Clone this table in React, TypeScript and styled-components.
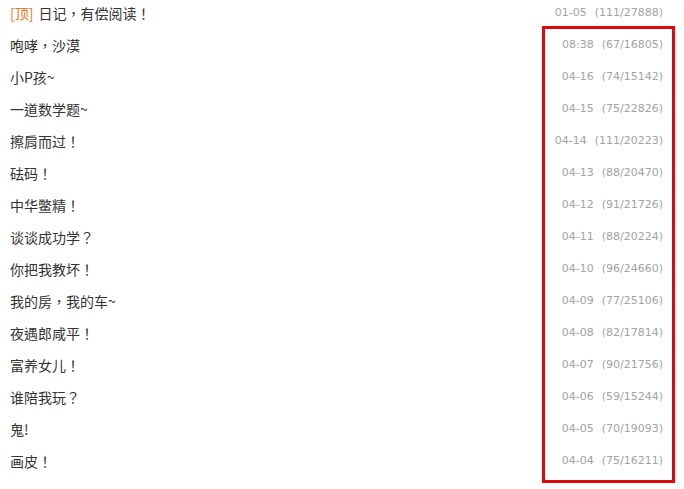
import React from "react";
import styled, { createGlobalStyle } from "styled-components";

const Global = createGlobalStyle`
  html, body { margin: 0; padding: 0; background: #fff; }
  body { width: 684px; height: 489px; overflow: hidden; }
`;

const Page = styled.div`
  position: relative;
  width: 684px;
  height: 489px;
`;

const List = styled.ul`
  list-style: none;
  margin: 0;
  padding: 0 21px 0 10px;
`;

const Row = styled.li`
  display: flex;
  align-items: center;
  justify-content: space-between;
  height: 26px;
  padding-bottom: 6px;
`;

const Title = styled.span`
  font-family: "Noto Sans CJK TC", "Noto Sans CJK SC", "Noto Sans", sans-serif;
  font-size: 14px;
  color: #333;
  line-height: 26px;
`;

const Tag = styled.span`
  color: #e8761e;
  margin-right: 5px;
`;

const Meta = styled.span`
  font-family: "DejaVu Sans", sans-serif;
  font-size: 11px;
  color: #a3a3a3;
  line-height: 26px;
  white-space: nowrap;
`;

const Count = styled.span`
  margin-left: 8px;
`;

const Highlight = styled.div`
  position: absolute;
  left: 542px;
  top: 26px;
  width: 127px;
  height: 451px;
  border: 3px solid #dd0a0a;
  pointer-events: none;
`;

const rows: { title: string; date: string; count: string; top?: boolean }[] = [
  { title: "日记，有偿阅读！", date: "01-05", count: "(111/27888)", top: true },
  { title: "咆哮，沙漠", date: "08:38", count: "(67/16805)" },
  { title: "小P孩~", date: "04-16", count: "(74/15142)" },
  { title: "一道数学题~", date: "04-15", count: "(75/22826)" },
  { title: "擦肩而过！", date: "04-14", count: "(111/20223)" },
  { title: "砝码！", date: "04-13", count: "(88/20470)" },
  { title: "中华鳖精！", date: "04-12", count: "(91/21726)" },
  { title: "谈谈成功学？", date: "04-11", count: "(88/20224)" },
  { title: "你把我教坏！", date: "04-10", count: "(96/24660)" },
  { title: "我的房，我的车~", date: "04-09", count: "(77/25106)" },
  { title: "夜遇郎咸平！", date: "04-08", count: "(82/17814)" },
  { title: "富养女儿！", date: "04-07", count: "(90/21756)" },
  { title: "谁陪我玩？", date: "04-06", count: "(59/15244)" },
  { title: "鬼!", date: "04-05", count: "(70/19093)" },
  { title: "画皮！", date: "04-04", count: "(75/16211)" },
];

export default function App() {
  return (
    <Page>
      <Global />
      <List>
        {rows.map((r) => (
          <Row key={r.date + r.title}>
            <Title>
              {r.top && <Tag>[顶]</Tag>}
              {r.title}
            </Title>
            <Meta>
              {r.date}
              <Count>{r.count}</Count>
            </Meta>
          </Row>
        ))}
      </List>
      <Highlight />
    </Page>
  );
}
